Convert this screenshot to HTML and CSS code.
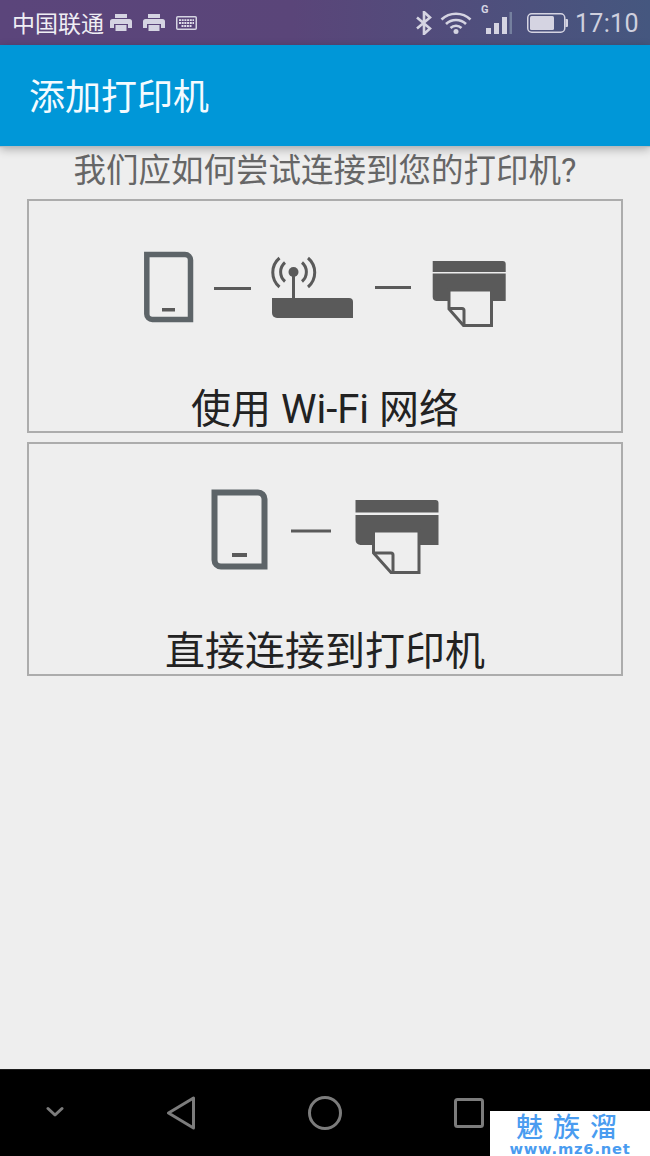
FILE: index.html
```html
<!DOCTYPE html>
<html lang="zh">
<head>
<meta charset="utf-8">
<title>添加打印机</title>
<link rel="stylesheet" href="styles.css">
</head>
<body>
<div class="screen">
  <header class="status">
    <span class="carrier">中国联通</span>
    <svg class="st-print" viewBox="0 0 22 18"><path class="st-fill" d="M5 0h12v4H5zM2.500 5h17A2.500 2.500 0 0 1 22 7.500V14h-4v-4H4v4H0V7.500A2.500 2.500 0 0 1 2.500 5zM5.500 11h11v6h-11z"/></svg>
    <svg class="st-print" viewBox="0 0 22 18"><path class="st-fill" d="M5 0h12v4H5zM2.500 5h17A2.500 2.500 0 0 1 22 7.500V14h-4v-4H4v4H0V7.500A2.500 2.500 0 0 1 2.500 5zM5.500 11h11v6h-11z"/></svg>
    <svg class="st-keys" viewBox="0 0 21 14"><rect class="st-line" x=".75" y=".75" width="19.500" height="12.500" rx="1"/><path class="st-dash" d="M3 4.200h15M3 7h15M5.500 10h10"/></svg>
    <svg class="st-bt" viewBox="0 0 18 24"><path class="st-thick" d="M2 6.500l13 11L9 23V1l6 5.500-13 11"/></svg>
    <svg class="st-wifi" viewBox="0 0 32 22"><path class="st-thick" d="M1.500 7.500a21 21 0 0 1 29 0M6 12a14.500 14.500 0 0 1 20 0M10.500 16a8 8 0 0 1 11 0"/><circle class="st-fill" cx="16" cy="19.500" r="2.500"/></svg>
    <span class="st-signal">
      <span class="st-g">G</span>
      <svg class="st-bars" viewBox="0 0 26 22"><path class="st-fill" d="M0 16h5v6H0zM8 11h5v11H8zM16 5h5v17h-5z"/><path class="st-dim" d="M23.500 0H26v22h-2.500z"/></svg>
    </span>
    <svg class="st-batt" viewBox="0 0 41 20"><rect class="st-line" x=".75" y=".75" width="37" height="18.500" rx="4"/><rect class="st-fill" x="3" y="3" width="24" height="14" rx="1.500"/><path class="st-fill" d="M38.500 6H40a1 1 0 0 1 1 1v6a1 1 0 0 1-1 1h-1.500z"/></svg>
    <span class="clock">17:10</span>
  </header>

  <div class="appbar"><h1 class="title">添加打印机</h1></div>

  <main class="content">
    <p class="question">我们应如何尝试连接到您的打印机?</p>

    <button class="option option-wifi" type="button">
      <svg class="art art-wifi" viewBox="144 251 364 78">
        <path class="phone" d="M146.800 254.500H185a5.500 5.500 0 0 1 5.500 5.500V319.500H152.300a5.500 5.500 0 0 1-5.500-5.500z"/>
        <path class="ink-fill" d="M162 308h13v3.500h-13z"/>
        <path class="ink-line" d="M214 288.500h37"/>
        <path class="ink-fill" d="M272 298h77a4 4 0 0 1 4 4v16h-76a5 5 0 0 1-5-5z"/>
        <path class="ink-line" d="M293.500 272v26"/>
        <circle class="ink-fill" cx="293.500" cy="272" r="5"/>
        <path class="ink-arc" d="M279.500 258a19 19 0 0 0 0 29M285 262.500a12.500 12.500 0 0 0 0 19M308 258a19 19 0 0 1 0 29M302 262.500a12.500 12.500 0 0 1 0 19"/>
        <path class="ink-line" d="M375 287.500h36"/>
        <path class="ink-fill" d="M432.700 261h70a3 3 0 0 1 3 3v8h-73zM432.700 273.500h73V301h-69.500a4 4 0 0 1-3.500-4z"/>
        <path class="paper" d="M449 290h42.500v35.500H463.500L449 309z"/>
        <path class="fold" d="M449 308.500h13a2 2 0 0 1 2 2v15"/>
      </svg>
      <span class="label">使用 Wi-Fi 网络</span>
    </button>

    <button class="option option-direct" type="button">
      <svg class="art art-direct" viewBox="211 489 228 86">
        <path class="phone phone-big" d="M214.500 492.500H258a6.500 6.500 0 0 1 6.500 6.500V566.500H221a6.500 6.500 0 0 1-6.500-6.500z"/>
        <path class="ink-fill" d="M232 553h15v4h-15z"/>
        <path class="ink-line" d="M291 531h40"/>
        <path class="ink-fill" d="M355.500 500h80a3 3 0 0 1 3 3v9.500h-83zM355.500 515h83v30h-78a5 5 0 0 1-5-5z"/>
        <path class="paper" d="M373.500 531h45.500v41.500H391L373.500 553z"/>
        <path class="fold" d="M373.500 553H391a2 2 0 0 1 2 2v17"/>
      </svg>
      <span class="label">直接连接到打印机</span>
    </button>
  </main>

  <nav class="navbar">
    <svg class="nav-chevron" viewBox="0 0 18 12"><path class="nav-line" d="M2 2.500l7 6.500 7-6.500"/></svg>
    <svg class="nav-back" viewBox="0 0 30 34"><path class="nav-line" d="M2.500 17L27.500 2v30z"/></svg>
    <svg class="nav-home" viewBox="0 0 34 34"><circle class="nav-line" cx="17" cy="17" r="15.500"/></svg>
    <svg class="nav-recent" viewBox="0 0 30 30"><rect class="nav-line" x="1.500" y="1.500" width="27" height="27" rx="2"/></svg>
  </nav>

  <div class="watermark">
    <span class="wm-name">魅族溜</span>
    <span class="wm-url">www.mz6.net</span>
  </div>
</div>
</body>
</html>
```

FILE: styles.css
```css
* { box-sizing: border-box; }
html, body { margin: 0; padding: 0; }
body {
  font-family: Roboto, "Noto Sans CJK SC", sans-serif;
  background: #eeeeee;
}
.screen {
  position: relative;
  width: 650px;
  height: 1156px;
  display: flex;
  flex-direction: column;
  overflow: hidden;
  background: #eeeeee;
}

/* status bar */
.status {
  height: 45px;
  flex: none;
  display: flex;
  align-items: center;
  padding-left: 12px;
  background: linear-gradient(90deg, #5b457b 0%, #5a4579 45%, #45577f 100%);
  color: #dcdbe6;
}
.carrier {
  font-size: 23px;
  line-height: 45px;
  width: 88px;
  margin-top: 3px;
  white-space: nowrap;
  letter-spacing: 0;
  color: #efeef4;
}
.st-print { width: 22px; height: 18px; margin-left: 10px; margin-top: 1px; }
.st-print + .st-print { margin-left: 11px; }
.st-keys { width: 21px; height: 14px; margin-left: 11px; }
.st-fill { fill: #d5d4e2; }
.st-line { fill: none; stroke: #d5d4e2; stroke-width: 1.500; }
.st-dash { fill: none; stroke: #e0dfea; stroke-width: 1.800; stroke-dasharray: 2 .7; }
.st-thick { fill: none; stroke: #d5d4e2; stroke-width: 2.600; }
.st-dim { fill: #75809f; }
.st-bt { width: 18px; height: 24px; margin-left: 218px; }
.st-wifi { width: 32px; height: 22px; margin-left: 7px; margin-top: 1px; }
.st-signal { position: relative; width: 26px; height: 22px; margin-left: 14px; margin-top: 1px; }
.st-bars { display: block; width: 26px; height: 22px; }
.st-g {
  position: absolute;
  left: -5px;
  top: -8px;
  font: bold 11px/12px Roboto, sans-serif;
  color: #d5d4e2;
}
.st-batt { width: 41px; height: 20px; margin-left: 15px; margin-top: 1px; }
.clock {
  font-family: Roboto, sans-serif;
  font-size: 25px;
  line-height: 45px;
  margin-left: 7px;
  margin-top: 1px;
  letter-spacing: .3px;
  color: #cfd0de;
}

/* app bar */
.appbar {
  position: relative;
  z-index: 1;
  height: 101px;
  flex: none;
  display: flex;
  align-items: center;
  padding-left: 29px;
  background: #0097d8;
  box-shadow: 0 1px 1px #b5bcc0, 0 3px 9px rgba(0, 0, 0, .3);
}
.title {
  margin: 4px 0 0;
  font-size: 36px;
  font-weight: 400;
  line-height: 50px;
  color: #f4fbff;
}

/* content */
.content {
  flex: 1;
  display: flex;
  flex-direction: column;
  align-items: center;
  padding-top: 3px;
}
.question {
  margin: 0 0 5px;
  height: 45px;
  font-size: 32.500px;
  line-height: 45px;
  white-space: nowrap;
  color: #666666;
}
.option {
  display: flex;
  flex-direction: column;
  justify-content: flex-start;
  align-items: flex-start;
  width: 596px;
  height: 234px;
  margin: 0;
  padding: 0;
  border: 2px solid #acacac;
  background: transparent;
  font: inherit;
}
.option + .option { margin-top: 9px; }
.art { display: block; flex: none; }
.art-wifi { width: 364px; height: 78px; margin-top: 50px; margin-left: 115px; }
.art-direct { width: 228px; height: 86px; margin-top: 45px; margin-left: 182px; }
.label {
  display: block;
  align-self: stretch;
  text-align: center;
  font-size: 40px;
  line-height: 50px;
  white-space: nowrap;
  color: #222222;
}
.option-wifi .label { margin-top: 56px; }
.option-direct .label { margin-top: 52px; }

.phone { fill: none; stroke: #5d6468; stroke-width: 5.500; }
.phone-big { stroke-width: 6; }
.ink-fill { fill: #5a5a5a; }
.ink-line { fill: none; stroke: #5a5a5a; stroke-width: 3; }
.ink-arc { fill: none; stroke: #5a5a5a; stroke-width: 3; }
.paper { fill: #eeeeee; stroke: #5a5a5a; stroke-width: 3; }
.fold { fill: none; stroke: #5a5a5a; stroke-width: 3; }

/* navigation */
.navbar {
  height: 87px;
  flex: none;
  display: grid;
  grid-template-columns: 109px 144px 144px 144px;
  justify-items: center;
  align-items: center;
  background: #000000;
  border-top: 1px solid #1c1c1c;
}
.nav-line { fill: none; stroke: #7c7c7c; stroke-width: 3; stroke-linejoin: round; stroke-linecap: round; }
.nav-chevron { width: 18px; height: 12px; margin-top: -2px; }
.nav-back { width: 30px; height: 34px; }
.nav-home { width: 34px; height: 34px; }
.nav-recent { width: 30px; height: 30px; }

/* watermark */
.watermark {
  position: absolute;
  right: 0;
  bottom: 0;
  width: 160px;
  height: 45px;
  background: #ffffff;
  display: flex;
  flex-direction: column;
  align-items: center;
  color: #4a9cf0;
}
.wm-name {
  font-size: 27px;
  line-height: 35px;
  letter-spacing: 10px;
  margin-right: -3px;
  white-space: nowrap;
  font-weight: 500;
}
.wm-url {
  font-family: "DejaVu Sans", sans-serif;
  font-weight: 700;
  font-size: 14.700px;
  line-height: 14px;
  margin-top: -4px;
  letter-spacing: .8px;
  white-space: nowrap;
}
```
